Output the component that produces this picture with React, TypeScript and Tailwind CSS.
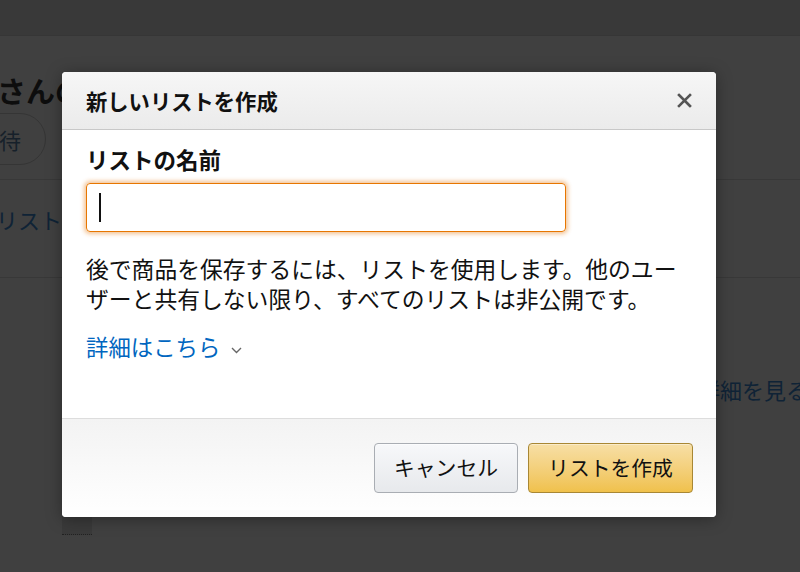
import React from 'react';

const jp = { fontFamily: '"Noto Sans CJK JP", "Noto Sans", sans-serif' };

const CloseIcon = () => (
  <svg width="15" height="15" viewBox="0 0 15 15" className="text-[#555]">
    <path d="M2 2 L13 13 M13 2 L2 13" stroke="currentColor" strokeWidth="2.6" strokeLinecap="square" />
  </svg>
);

const Chevron = () => (
  <svg width="11" height="7" viewBox="0 0 11 7" className="text-[#666] mt-[8px]">
    <path d="M1 1 L5.5 5.5 L10 1" fill="none" stroke="currentColor" strokeWidth="1.4" />
  </svg>
);

// page behind the modal, already darkened by the overlay
const BackgroundPage = () => (
  <div className="flex flex-col">
    <div className="h-[36px] bg-[#393939] border-b border-[#363636]" />
    <div className="pt-[34px] -ml-[3px] text-[29px] font-bold leading-[40px] text-[#0d0d0d] whitespace-nowrap">
      さんの
    </div>
    <div className="mt-[3px] -ml-[40px] w-[86px] h-[52px] rounded-full border border-[#353535] flex items-center justify-end pr-[24px] text-[22px] text-[#16202a]">
      待
    </div>
    <div className="mt-[14px] h-px bg-[#383838]" />
    <div className="h-[97px] pt-[24px] text-[22px] leading-[30px] text-[#0f2336] -ml-[4px]">リスト</div>
    <div className="h-px bg-[#383838]" />
    <div className="mt-[96px] flex justify-end text-[22px] text-[#0f2336] leading-[30px] -mr-[8px]">詳細を見る</div>
  </div>
);

export default function App() {
  return (
    <div className="relative w-[800px] h-[572px] overflow-hidden bg-[#404040]" style={jp}>
      <BackgroundPage />
      <div className="absolute left-[62px] top-[517px] w-[30px] h-[18px] bg-[#3a3a3a] border-b border-dotted border-[#222]" />

      {/* modal */}
      <div className="absolute left-[62px] top-[72px] w-[654px] h-[445px] flex flex-col rounded-[4px] bg-white overflow-hidden shadow-[0_2px_16px_rgba(0,0,0,0.35)]">
        <div className="h-[58px] shrink-0 flex items-center justify-between pl-[24px] pr-[24px] bg-gradient-to-b from-[#f6f6f6] to-[#ebebeb] border-b border-[#c8c8c8]">
          <h2 className="text-[21.3px] font-bold text-[#111] leading-none">新しいリストを作成</h2>
          <CloseIcon />
        </div>

        <div className="flex-1 px-[24px] pt-[14px]">
          <label className="block text-[22.5px] font-bold text-[#111] leading-[30px]">リストの名前</label>
          <div className="mt-[9px] w-[480px] h-[49px] rounded-[4px] border border-[#e77600] shadow-[0_0_4px_2px_rgba(228,121,17,0.45)] flex items-center pl-[12px]">
            <div className="w-[2px] h-[29px] bg-[#111]" />
          </div>
          <p className="mt-[22px] text-[22.8px] leading-[30px] text-[#111] whitespace-nowrap">
            後で商品を保存するには、リストを使用します。他のユー
            <br />
            ザーと共有しない限り、すべてのリストは非公開です。
          </p>
          <div className="mt-[17px] flex items-center gap-[11px]">
            <a className="text-[22.4px] leading-[30px] text-[#0066c0]">詳細はこちら</a>
            <Chevron />
          </div>
        </div>

        <div className="h-[99px] shrink-0 border-t border-[#dddddd] bg-gradient-to-b from-[#f3f3f3] to-white flex justify-end items-start gap-[10px] pt-[24px] pr-[23px]">
          <button className="w-[144px] h-[50px] rounded-[4px] border border-[#a9adb3] bg-gradient-to-b from-[#f7f8fa] to-[#e7e9ec] text-[20.8px] text-[#111] shadow-[inset_0_1px_0_rgba(255,255,255,0.6)]">
            キャンセル
          </button>
          <button className="w-[165px] h-[50px] rounded-[4px] border border-[#a88734] bg-gradient-to-b from-[#f7dfa5] to-[#f0c14b] text-[20.8px] text-[#111] shadow-[inset_0_1px_0_rgba(255,255,255,0.4)]">
            リストを作成
          </button>
        </div>
      </div>
    </div>
  );
}
